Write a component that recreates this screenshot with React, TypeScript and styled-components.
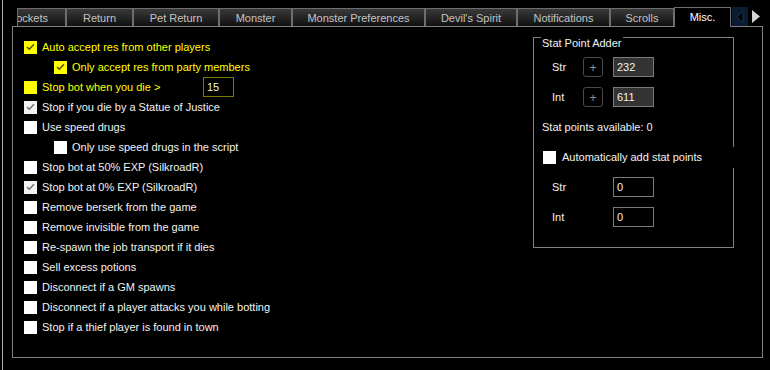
import React from 'react';
import styled, { createGlobalStyle } from 'styled-components';

const GlobalStyle = createGlobalStyle`
  html, body {
    margin: 0;
    padding: 0;
    background: #000;
  }
  body {
    font-family: 'Liberation Sans', Arial, sans-serif;
    font-size: 11px;
  }
`;

const Window = styled.div`
  width: 770px;
  height: 370px;
  background: #000;
  display: flex;
  overflow: hidden;
`;

const EdgeRule = styled.div`
  width: 1px;
  margin-left: 2px;
  background: #a8a8a8;
`;

const Main = styled.div`
  margin-left: 9px;
  padding-top: 7px;
  width: 751px;
  display: flex;
  flex-direction: column;
`;

const TabBar = styled.div`
  height: 19px;
  padding-left: 5px;
  display: flex;
  align-items: flex-end;
`;

const Tab = styled.div<{ $width: number; $active?: boolean; $clipped?: boolean }>`
  box-sizing: border-box;
  width: ${(p) => p.$width}px;
  height: ${(p) => (p.$active ? 20 : 18)}px;
  margin-bottom: ${(p) => (p.$active ? -1 : 0)}px;
  z-index: ${(p) => (p.$active ? 1 : 0)};
  border: 1px solid #6e6e6e;
  border-bottom: none;
  background: ${(p) => (p.$active ? '#000' : 'linear-gradient(#3a3a3a, #101010)')};
  color: ${(p) => (p.$active ? '#ffffff' : '#c4c4c4')};
  display: flex;
  align-items: center;
  justify-content: ${(p) => (p.$clipped ? 'flex-end' : 'center')};
  padding-right: ${(p) => (p.$clipped ? 17 : 0)}px;
  padding-bottom: ${(p) => (p.$active ? 1 : 0)}px;
  overflow: hidden;
  white-space: nowrap;
  flex-shrink: 0;
`;

const ScrollArrows = styled.div`
  display: flex;
  align-items: flex-end;
  height: 19px;
`;

const ArrowBox = styled.div`
  width: 16px;
  height: 19px;
  margin-left: 1px;
  background: #0a1c30;
  display: flex;
  align-items: center;
  justify-content: center;
`;

const ArrowRight = styled.div`
  margin-left: 4px;
  height: 19px;
  display: flex;
  align-items: center;
`;

const Panel = styled.div`
  box-sizing: border-box;
  height: 332px;
  border: 1px solid #808080;
  display: flex;
  align-items: flex-start;
  padding: 10px 0 0 11px;
`;

const OptionList = styled.div`
  width: 509px;
  display: flex;
  flex-direction: column;
`;

const OptionRow = styled.div<{ $indent?: boolean }>`
  height: 20px;
  display: flex;
  align-items: center;
  gap: 5px;
  padding-left: ${(p) => (p.$indent ? 30 : 0)}px;
`;

const OptionLabel = styled.span<{ $yellow?: boolean; $width?: number }>`
  color: ${(p) => (p.$yellow ? '#ffff00' : '#f2f2f2')};
  white-space: nowrap;
  ${(p) => (p.$width ? `width: ${p.$width}px;` : '')}
`;

const Box = styled.span<{ $yellow?: boolean; $checked?: boolean }>`
  box-sizing: border-box;
  width: 13px;
  height: 13px;
  flex-shrink: 0;
  background: ${(p) => (p.$yellow ? '#ffff00' : p.$checked ? '#f2f2f2' : '#ffffff')};
  display: flex;
  align-items: center;
  justify-content: center;
`;

const DeathCount = styled.input`
  box-sizing: border-box;
  width: 31px;
  height: 20px;
  border: 1px solid #7a7a00;
  background: #000;
  color: #f4f4dc;
  font: 11px 'Liberation Sans', Arial, sans-serif;
  padding: 0 0 0 3px;
  outline: none;
`;

const GroupBox = styled.div`
  box-sizing: border-box;
  position: relative;
  width: 201px;
  height: 211px;
  border: 1px solid #808080;
  padding: 14px 0 0 8px;
  display: flex;
  flex-direction: column;
`;

const GroupCaption = styled.span`
  position: absolute;
  top: -1px;
  left: 7px;
  padding: 0 1px;
  line-height: 13px;
  background: #000;
  color: #f2f2f2;
`;

const StatRow = styled.div`
  height: 30px;
  display: flex;
  align-items: center;
  color: #f2f2f2;
`;

const StatLabel = styled.span`
  width: 31px;
  margin-left: 10px;
`;

const PlusButton = styled.div`
  box-sizing: border-box;
  width: 20px;
  height: 20px;
  border: 1px solid #4a4a4a;
  border-radius: 3px;
  color: #8a8a8a;
  font-size: 13px;
  display: flex;
  align-items: center;
  justify-content: center;
  margin-right: 10px;
`;

const StatInput = styled.div<{ $filled?: boolean; $shifted?: boolean }>`
  box-sizing: border-box;
  width: 41px;
  height: 20px;
  border: 1px solid #7a7a7a;
  background: ${(p) => (p.$filled ? '#333333' : '#000')};
  color: #f2f2f2;
  padding-left: 3px;
  display: flex;
  align-items: center;
  margin-left: ${(p) => (p.$shifted ? 30 : 0)}px;
`;

const AutoStrip = styled.div`
  flex: 1;
  height: 21px;
  margin-right: -8px;
  padding-left: 1px;
  background: #000;
  display: flex;
  align-items: center;
  gap: 6px;
`;

type Option = {
  label: string;
  checked?: boolean;
  yellow?: boolean;
  indent?: boolean;
  deathCount?: string;
};

const options: Option[] = [
  { label: 'Auto accept res from other players', checked: true, yellow: true },
  { label: 'Only accept res from party members', checked: true, yellow: true, indent: true },
  { label: 'Stop bot when you die >', yellow: true, deathCount: '15' },
  { label: 'Stop if you die by a Statue of Justice', checked: true },
  { label: 'Use speed drugs' },
  { label: 'Only use speed drugs in the script', indent: true },
  { label: 'Stop bot at 50% EXP (SilkroadR)' },
  { label: 'Stop bot at 0% EXP (SilkroadR)', checked: true },
  { label: 'Remove berserk from the game' },
  { label: 'Remove invisible from the game' },
  { label: 'Re-spawn the job transport if it dies' },
  { label: 'Sell excess potions' },
  { label: 'Disconnect if a GM spawns' },
  { label: 'Disconnect if a player attacks you while botting' },
  { label: 'Stop if a thief player is found in town' },
];

const tabs = [
  { label: 'Pockets', width: 49, clipped: true },
  { label: 'Return', width: 67 },
  { label: 'Pet Return', width: 86 },
  { label: 'Monster', width: 73 },
  { label: 'Monster Preferences', width: 133 },
  { label: "Devil's Spirit", width: 92 },
  { label: 'Notifications', width: 93 },
  { label: 'Scrolls', width: 64 },
  { label: 'Misc.', width: 57, active: true },
];

function CheckBox({ checked, yellow }: { checked?: boolean; yellow?: boolean }) {
  return (
    <Box $yellow={yellow} $checked={checked}>
      {checked && (
        <svg width="9" height="8" viewBox="0 0 9 8">
          <polyline
            points="1,4 3.3,6.3 8,1.3"
            fill="none"
            stroke={yellow ? '#4c4c00' : '#6e6e6e'}
            strokeWidth="1.4"
          />
        </svg>
      )}
    </Box>
  );
}

export default function App() {
  return (
    <>
      <GlobalStyle />
      <Window>
        <EdgeRule />
        <Main>
          <TabBar>
            {tabs.map((t) => (
              <Tab key={t.label} $width={t.width} $active={t.active} $clipped={t.clipped}>
                {t.label}
              </Tab>
            ))}
            <ScrollArrows>
              <ArrowBox>
                <svg width="8" height="12" viewBox="0 0 8 12">
                  <polygon points="7,0.5 7,11.5 0.5,6" fill="#000" stroke="#1d3550" strokeWidth="1" />
                </svg>
              </ArrowBox>
              <ArrowRight>
                <svg width="8" height="13" viewBox="0 0 8 13">
                  <polygon points="0,0 8,6.5 0,13" fill="#d4d4d4" />
                </svg>
              </ArrowRight>
            </ScrollArrows>
          </TabBar>
          <Panel>
            <OptionList>
              {options.map((o) => (
                <OptionRow key={o.label} $indent={o.indent}>
                  <CheckBox checked={o.checked} yellow={o.yellow} />
                  <OptionLabel $yellow={o.yellow} $width={o.deathCount ? 156 : undefined}>
                    {o.label}
                  </OptionLabel>
                  {o.deathCount && <DeathCount readOnly value={o.deathCount} />}
                </OptionRow>
              ))}
            </OptionList>
            <GroupBox>
              <GroupCaption>Stat Point Adder</GroupCaption>
              <StatRow>
                <StatLabel>Str</StatLabel>
                <PlusButton>+</PlusButton>
                <StatInput $filled>232</StatInput>
              </StatRow>
              <StatRow>
                <StatLabel>Int</StatLabel>
                <PlusButton>+</PlusButton>
                <StatInput $filled>611</StatInput>
              </StatRow>
              <StatRow>Stat points available: 0</StatRow>
              <StatRow>
                <AutoStrip>
                  <CheckBox />
                  <span>Automatically add stat points</span>
                </AutoStrip>
              </StatRow>
              <StatRow>
                <StatLabel>Str</StatLabel>
                <StatInput $shifted>0</StatInput>
              </StatRow>
              <StatRow>
                <StatLabel>Int</StatLabel>
                <StatInput $shifted>0</StatInput>
              </StatRow>
            </GroupBox>
          </Panel>
        </Main>
      </Window>
    </>
  );
}
